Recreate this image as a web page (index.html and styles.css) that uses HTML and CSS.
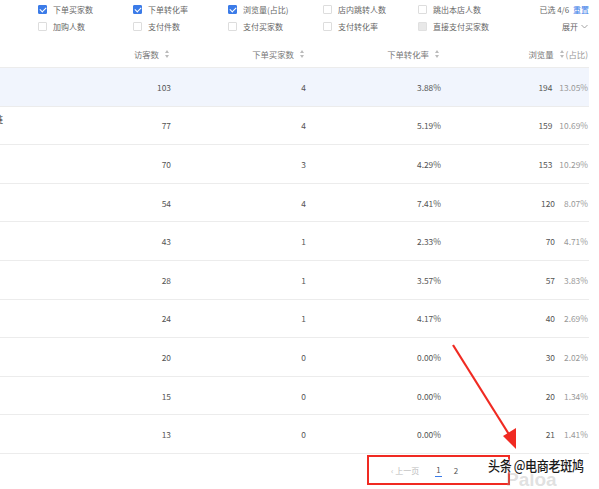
FILE: index.html
```html
<!DOCTYPE html>
<html>
<head>
<meta charset="utf-8">
<link rel="stylesheet" href="styles.css">
</head>
<body>
<div class="page">
  <div class="filters">
    <div class="frow">
      <label class="opt"><span class="cb on"></span>下单买家数</label>
      <label class="opt"><span class="cb on"></span>下单转化率</label>
      <label class="opt"><span class="cb on"></span>浏览量(占比)</label>
      <label class="opt"><span class="cb"></span>店内跳转人数</label>
      <label class="opt"><span class="cb"></span>跳出本店人数</label>
      <span class="sel">已选 4/6 <a class="reset">重置</a></span>
    </div>
    <div class="frow">
      <label class="opt"><span class="cb"></span>加购人数</label>
      <label class="opt"><span class="cb"></span>支付件数</label>
      <label class="opt"><span class="cb"></span>支付买家数</label>
      <label class="opt"><span class="cb"></span>支付转化率</label>
      <label class="opt"><span class="cb dis"></span>直接支付买家数</label>
      <span class="expand">展开 <svg width="7" height="5" viewBox="0 0 7 5"><path d="M0.5 1 L3.5 4 L6.5 1" fill="none" stroke="#999" stroke-width="0.9"/></svg></span>
    </div>
  </div>

  <div class="table">
    <div class="tr head">
      <div class="c0"></div>
      <div class="c">访客数<i class="sort"></i></div>
      <div class="c">下单买家数<i class="sort"></i></div>
      <div class="c">下单转化率<i class="sort"></i></div>
      <div class="c last">浏览量<i class="sort"></i><span class="pct">(占比)</span></div>
    </div>
    <div class="tr hl"><div class="c0"></div><div class="c">103</div><div class="c">4</div><div class="c">3.88%</div><div class="c last">194<span class="pct">13.05%</span></div></div>
    <div class="tr"><div class="c0"><span class="cut">链</span></div><div class="c">77</div><div class="c">4</div><div class="c">5.19%</div><div class="c last">159<span class="pct">10.69%</span></div></div>
    <div class="tr"><div class="c0"></div><div class="c">70</div><div class="c">3</div><div class="c">4.29%</div><div class="c last">153<span class="pct">10.29%</span></div></div>
    <div class="tr"><div class="c0"></div><div class="c">54</div><div class="c">4</div><div class="c">7.41%</div><div class="c last">120<span class="pct">8.07%</span></div></div>
    <div class="tr"><div class="c0"></div><div class="c">43</div><div class="c">1</div><div class="c">2.33%</div><div class="c last">70<span class="pct">4.71%</span></div></div>
    <div class="tr"><div class="c0"></div><div class="c">28</div><div class="c">1</div><div class="c">3.57%</div><div class="c last">57<span class="pct">3.83%</span></div></div>
    <div class="tr"><div class="c0"></div><div class="c">24</div><div class="c">1</div><div class="c">4.17%</div><div class="c last">40<span class="pct">2.69%</span></div></div>
    <div class="tr"><div class="c0"></div><div class="c">20</div><div class="c">0</div><div class="c">0.00%</div><div class="c last">30<span class="pct">2.02%</span></div></div>
    <div class="tr"><div class="c0"></div><div class="c">15</div><div class="c">0</div><div class="c">0.00%</div><div class="c last">20<span class="pct">1.34%</span></div></div>
    <div class="tr"><div class="c0"></div><div class="c">13</div><div class="c">0</div><div class="c">0.00%</div><div class="c last">21<span class="pct">1.41%</span></div></div>
  </div>

  <div class="pager">
    <span class="prev">‹ 上一页</span>
    <span class="pg cur">1</span>
    <span class="pg">2</span>
  </div>

  <div class="redbox"></div>
  <svg class="arrow" width="599" height="489" viewBox="0 0 599 489">
    <line x1="453" y1="345" x2="510" y2="436" stroke="#f02a22" stroke-width="2.2"/>
    <polygon points="516,449 503,436 516,428" fill="#f02a22"/>
  </svg>
  <div class="wm-faint">Paloa</div>
  <div class="wm">头条 @电商老斑鸠</div>
</div>
</body>
</html>
```
FILE: styles.css
```css
* { box-sizing: border-box; }
body {
  margin: 0;
  background: #fff;
  font-family: "Noto Sans CJK SC", "Noto Sans", sans-serif;
  color: #444;
}
.page {
  position: relative;
  width: 599px;
  height: 489px;
  overflow: hidden;
}
.filters {
  padding: 1px 0 0 38px;
  height: 40px;
}
.frow {
  display: flex;
  align-items: center;
  height: 17px;
  font-size: 8px;
  color: #666;
}
.opt {
  display: flex;
  align-items: center;
  width: 95px;
  flex: none;
}
.cb {
  width: 9px;
  height: 9px;
  border: 1px solid #ddd;
  border-radius: 1px;
  margin-right: 6px;
  background: #fff;
  position: relative;
}
.cb.on {
  background: #3b7be8;
  border-color: #3b7be8;
}
.cb.on::after {
  content: "";
  position: absolute;
  left: 2px;
  top: 0px;
  width: 3px;
  height: 5px;
  border: solid #fff;
  border-width: 0 1.2px 1.2px 0;
  transform: rotate(45deg);
}
.cb.dis {
  background: #e8e8e8;
  border-color: #e0e0e0;
}
.sel {
  margin-left: auto;
  margin-right: 10px;
}
.reset { color: #3b7be8; margin-left: 2px; }
.expand {
  margin-left: auto;
  margin-right: 11px;
  display: flex;
  align-items: center;
  gap: 3px;
}
.table {
  width: 589px;
}
.tr {
  display: grid;
  grid-template-columns: 110px 65px 135px 135px 144px;
  height: 38.6px;
  align-items: center;
  border-bottom: 1px solid #ececec;
  font-size: 8.4px;
  color: #555;
}
.tr.head {
  height: 28px;
  color: #777;
}
.tr.hl { background: #f1f5fd; }
.c {
  text-align: right;
  padding-right: 4px;
  display: flex;
  justify-content: flex-end;
  align-items: center;
}
.tr.head .c { padding-right: 6px; }
.tr.head .c.last { padding-right: 1px; }
.c.last { padding-right: 1px; }
.c0 { position: relative; height: 100%; }
.cut {
  position: absolute;
  left: -6px;
  top: 6px;
  font-size: 9px;
  color: #333;
}
.pct {
  color: #999;
  margin-left: 7px;
  min-width: 26px;
  text-align: right;
}
.tr.head .pct { margin-left: 2px; min-width: 0; }
.sort {
  display: inline-block;
  width: 4px;
  height: 8px;
  margin-left: 6px;
  position: relative;
}
.sort::before, .sort::after {
  content: "";
  position: absolute;
  left: 0;
  border-left: 2px solid transparent;
  border-right: 2px solid transparent;
}
.sort::before { top: 0; border-bottom: 3px solid #bbb; }
.sort::after { bottom: 0; border-top: 3px solid #bbb; }
.pager {
  display: flex;
  align-items: center;
  padding-left: 391px;
  height: 34px;
  font-size: 8px;
  color: #bbb;
}
.prev { margin-right: 16px; }
.pg { color: #555; margin-right: 12px; }
.pg.cur {
  border-bottom: 1px solid #3b7be8;
  padding: 0 1px 1px;
}
.redbox {
  position: absolute;
  left: 367px;
  top: 455px;
  width: 143px;
  height: 30px;
  border: 2px solid #f02a22;
}
.arrow {
  position: absolute;
  left: 0;
  top: 0;
}
.wm-faint {
  position: absolute;
  left: 506px;
  top: 469px;
  font-family: "Liberation Sans", sans-serif;
  font-weight: bold;
  font-size: 19px;
  color: rgba(150,150,150,0.3);
  white-space: nowrap;
}
.wm {
  position: absolute;
  left: 488px;
  top: 455px;
  font-size: 14px;
  font-weight: 500;
  letter-spacing: -0.4px;
  transform: scaleX(0.86);
  transform-origin: left center;
  color: #1a1a1a;
  white-space: nowrap;
  text-shadow: 0 0 2px #fff, 0 0 2px #fff, 1px 1px 1px #fff, -1px -1px 1px #fff;
}
```
